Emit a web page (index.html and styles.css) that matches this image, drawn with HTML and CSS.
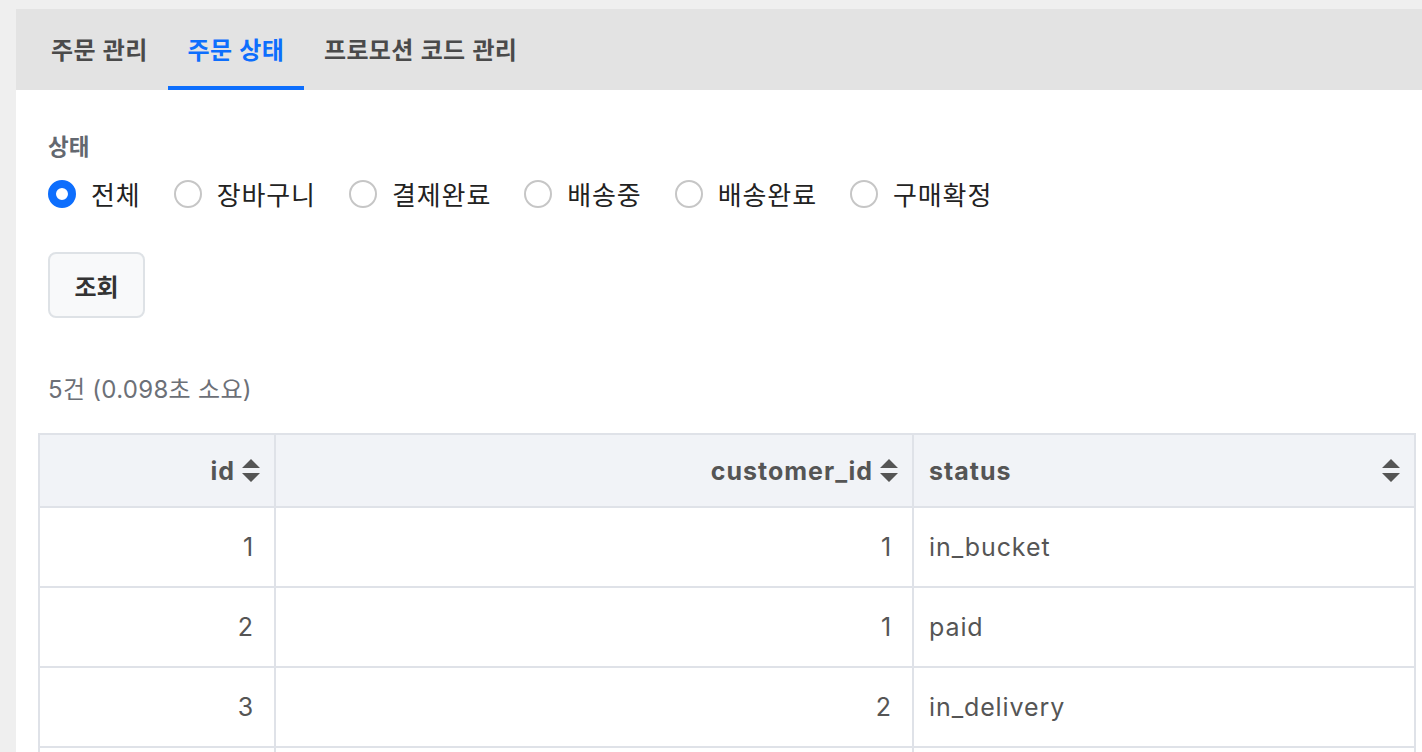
FILE: index.html
```html
<!DOCTYPE html>
<html lang="ko">
<head>
<meta charset="utf-8">
<title>주문 상태</title>
<link rel="stylesheet" href="styles.css">
</head>
<body>
<div class="panel">
  <nav class="tabs">
    <a class="tab">주문 관리</a>
    <a class="tab active">주문 상태</a>
    <a class="tab">프로모션 코드 관리</a>
  </nav>
  <main class="content">
    <div class="form">
      <div class="field-label">상태</div>
      <div class="radios">
        <label class="radio"><span class="dot checked"></span>전체</label>
        <label class="radio"><span class="dot"></span>장바구니</label>
        <label class="radio"><span class="dot"></span>결제완료</label>
        <label class="radio"><span class="dot"></span>배송중</label>
        <label class="radio"><span class="dot"></span>배송완료</label>
        <label class="radio"><span class="dot"></span>구매확정</label>
      </div>
      <button class="btn">조회</button>
      <div class="caption">5건 (0.098초 소요)</div>
    </div>
    <table class="grid">
      <colgroup>
        <col class="c1"><col class="c2"><col class="c3">
      </colgroup>
      <thead>
        <tr>
          <th><div class="th end">id<svg class="sort" viewBox="0 0 20 26"><path d="M10 1 L19 10 L1 10 Z M1 15 L19 15 L10 24 Z"/></svg></div></th>
          <th><div class="th end">customer_id<svg class="sort" viewBox="0 0 20 26"><path d="M10 1 L19 10 L1 10 Z M1 15 L19 15 L10 24 Z"/></svg></div></th>
          <th><div class="th between">status<svg class="sort" viewBox="0 0 20 26"><path d="M10 1 L19 10 L1 10 Z M1 15 L19 15 L10 24 Z"/></svg></div></th>
        </tr>
      </thead>
      <tbody>
        <tr><td class="num">1</td><td class="num">1</td><td>in_bucket</td></tr>
        <tr><td class="num">2</td><td class="num">1</td><td>paid</td></tr>
        <tr><td class="num">3</td><td class="num">2</td><td>in_delivery</td></tr>
        <tr><td class="num">4</td><td class="num">2</td><td>delivered</td></tr>
        <tr><td class="num">5</td><td class="num">3</td><td>confirmed</td></tr>
      </tbody>
    </table>
  </main>
</div>
</body>
</html>
```

FILE: styles.css
```css
html, body {
  margin: 0;
  padding: 0;
  background: #efefef;
}
body {
  font-family: "Inter", "Noto Sans CJK KR", sans-serif;
  color: #333;
}
.panel {
  margin: 9px 0 0 16px;
  background: #fff;
  padding-bottom: 40px;
}
.tabs {
  display: flex;
  height: 81px;
  background: #e3e3e3;
  padding-left: 15px;
  box-sizing: border-box;
}
.tab {
  display: flex;
  align-items: center;
  padding: 0 20px;
  height: 81px;
  box-sizing: border-box;
  border-bottom: 4px solid transparent;
  padding-top: 2px;
  font-size: 24px;
  letter-spacing: 0.3px;
  font-weight: 700;
  color: #4a4a4a;
  font-family: "Noto Sans CJK KR", sans-serif;
  cursor: pointer;
}
.tab.active {
  color: #0d6efd;
  border-bottom-color: #0d6efd;
}
.content {
  padding: 40px 8px 0 22px;
}
.form {
  padding-left: 10px;
}
.field-label {
  font-family: "Noto Sans CJK KR", sans-serif;
  font-size: 22.5px;
  font-weight: 700;
  color: #636870;
  line-height: 30px;
}
.radios {
  display: flex;
  align-items: center;
  margin-top: 16px;
  height: 36px;
}
.radio {
  display: flex;
  align-items: center;
  margin-right: 33px;
  font-family: "Noto Sans CJK KR", sans-serif;
  font-size: 26px;
  letter-spacing: 0.9px;
  color: #222;
  line-height: 36px;
}
.dot {
  width: 28px;
  height: 28px;
  border-radius: 50%;
  box-sizing: border-box;
  border: 2px solid #c6c6c6;
  background: #fff;
  margin-right: 15px;
  flex: none;
}
.dot.checked {
  border: 8px solid #0d6efd;
  background: #fff;
}
.btn {
  display: block;
  margin-top: 40px;
  width: 97px;
  height: 66px;
  border: 2px solid #dee2e6;
  border-radius: 8px;
  background: #f8f9fa;
  font-family: "Noto Sans CJK KR", sans-serif;
  font-size: 24px;
  font-weight: 700;
  color: #333;
  padding: 0;
}
.caption {
  margin-top: 57px;
  line-height: 30px;
  font-size: 24px;
  letter-spacing: 0.3px;
  color: #6c7077;
}
.grid {
  margin-top: 28px;
  border-collapse: collapse;
  table-layout: fixed;
  width: 1376px;
  border: 2px solid #dfe2e8;
}
.c1 { width: 236px; }
.c2 { width: 638px; }
.c3 { width: 502px; }
.grid th, .grid td {
  border: 2px solid #dfe2e8;
  box-sizing: border-box;
}
.grid th {
  background: #f1f3f7;
  height: 73px;
  padding: 0 13px 0 15px;
  font-size: 25px;
  letter-spacing: 1px;
  font-weight: 700;
  color: #555;
}
.th {
  display: flex;
  align-items: center;
}
.th.end { justify-content: flex-end; }
.th.between { justify-content: space-between; }
.sort {
  width: 20px;
  height: 26px;
  margin-left: 6px;
  fill: #555;
  flex: none;
}
.grid td {
  height: 80px;
  padding: 0 20px 0 15px;
  font-size: 25px;
  letter-spacing: 0.9px;
  color: #555;
}
.grid td.num { text-align: right; }
```
